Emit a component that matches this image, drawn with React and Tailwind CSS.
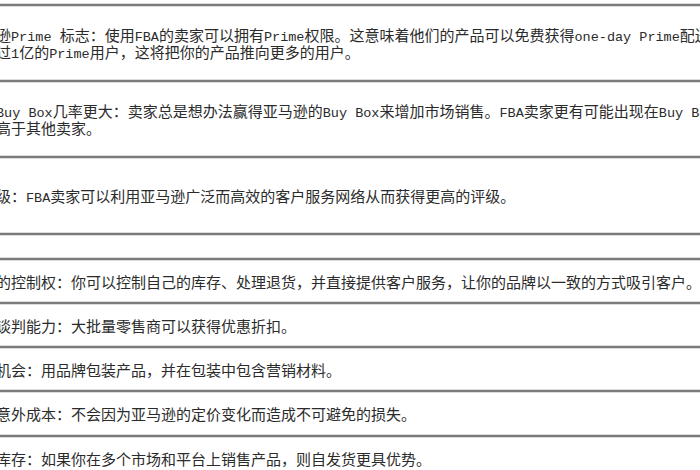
import React from 'react';

// rows of the table, each row holds its text lines (left side is cut off in the picture)
const rows = [
    {
        h: 'min-h-[72px]',
        lines: [
            '逊Prime 标志：使用FBA的卖家可以拥有Prime权限。这意味着他们的产品可以免费获得one-day Prime配送，',
            '过1亿的Prime用户，这将把你的产品推向更多的用户。',
        ],
    },
    {
        h: 'min-h-[72px]',
        lines: [
            'Buy Box几率更大：卖家总是想办法赢得亚马逊的Buy Box来增加市场销售。FBA卖家更有可能出现在Buy Box中，',
            '高于其他卖家。',
        ],
    },
    {
        h: 'min-h-[73px]',
        lines: ['级：FBA卖家可以利用亚马逊广泛而高效的客户服务网络从而获得更高的评级。'],
    },
    { h: 'min-h-[21px]', lines: [] },
    {
        h: 'min-h-[40px]',
        lines: ['的控制权：你可以控制自己的库存、处理退货，并直接提供客户服务，让你的品牌以一致的方式吸引客户。'],
    },
    { h: 'min-h-[40px]', lines: ['谈判能力：大批量零售商可以获得优惠折扣。'] },
    { h: 'min-h-[40px]', lines: ['机会：用品牌包装产品，并在包装中包含营销材料。'] },
    { h: 'min-h-[41px]', lines: ['意外成本：不会因为亚马逊的定价变化而造成不可避免的损失。'] },
    { h: 'min-h-[40px]', lines: ['库存：如果你在多个市场和平台上销售产品，则自发货更具优势。'] },
];

const Line = ({ text }) => {
    // latin runs use the narrow mono face, the rest is CJK
    const parts = text.split(/([A-Za-z0-9\- ]+)/).filter(Boolean);
    return (
        <div className="h-[17px] whitespace-pre">
            {parts.map((p, i) =>
                /^[A-Za-z0-9\- ]+$/.test(p) ? (
                    <span key={i} className="font-['Liberation_Mono',monospace] text-[13.5px]">{p}</span>
                ) : (
                    <span key={i}>{p}</span>
                )
            )}
        </div>
    );
};

const Separator = () => (
    <div className="h-[4px] border-y border-[#dcdcdc] bg-[#7b7b7b]" />
);

export default function App() {
    return (
        <div className="w-[700px] h-[470px] overflow-hidden bg-white pt-[3px] font-['Noto_Sans_CJK_SC',sans-serif] text-[15px] leading-[17px] text-[#2b2b2b]">
            {rows.map((row, i) => (
                <div key={i}>
                    <Separator />
                    <div className={`${row.h} flex flex-col justify-center overflow-hidden`}>
                        <div className="-ml-[4px]">
                            {row.lines.map((l, j) => (
                                <Line key={j} text={l} />
                            ))}
                        </div>
                    </div>
                </div>
            ))}
        </div>
    );
}
